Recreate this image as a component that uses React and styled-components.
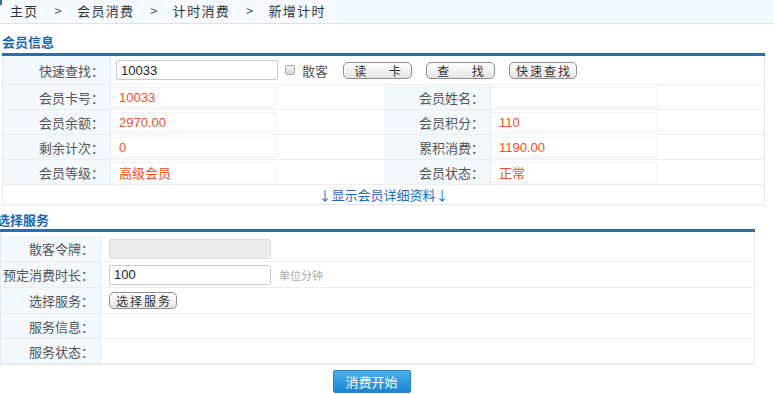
import React from "react";
import styled, { createGlobalStyle } from "styled-components";

const GlobalStyle = createGlobalStyle`
  body {
    margin: 0;
    background: #fff;
    font-family: "Noto Sans CJK SC", "Liberation Sans", sans-serif;
    font-size: 13px;
    color: #444;
  }
  * { box-sizing: border-box; }
`;

const App = () => {
  return (
    <>
      <GlobalStyle />
      <Breadcrumb>
        <Crumb>主页</Crumb>
        <Sep>&gt;</Sep>
        <Crumb>会员消费</Crumb>
        <Sep>&gt;</Sep>
        <Crumb>计时消费</Crumb>
        <Sep>&gt;</Sep>
        <Crumb>新增计时</Crumb>
      </Breadcrumb>

      <Section width="763px" offset="2px" top="4px">
        <SectionTitle height="28px">会员信息</SectionTitle>
        <Box>
          <Row height="29px">
            <Label width="108px">快速查找：</Label>
            <Cell>
              <TextInput defaultValue="10033" left="5px" />
              <Check />
              <CheckText>散客</CheckText>
              <GrayButton>读 卡</GrayButton>
              <GrayButton>查 找</GrayButton>
              <GrayButton tight>快速查找</GrayButton>
            </Cell>
          </Row>
          <Row>
            <Label width="108px">会员卡号：</Label>
            <Value>
              <ValueBox>10033</ValueBox>
            </Value>
            <Label width="107px">会员姓名：</Label>
            <Value>
              <ValueBox />
            </Value>
          </Row>
          <Row>
            <Label width="108px">会员余额：</Label>
            <Value>
              <ValueBox>2970.00</ValueBox>
            </Value>
            <Label width="107px">会员积分：</Label>
            <Value>
              <ValueBox>110</ValueBox>
            </Value>
          </Row>
          <Row>
            <Label width="108px">剩余计次：</Label>
            <Value>
              <ValueBox>0</ValueBox>
            </Value>
            <Label width="107px">累积消费：</Label>
            <Value>
              <ValueBox>1190.00</ValueBox>
            </Value>
          </Row>
          <Row>
            <Label width="108px">会员等级：</Label>
            <Value>
              <ValueBox>高级会员</ValueBox>
            </Value>
            <Label width="107px">会员状态：</Label>
            <Value>
              <ValueBox>正常</ValueBox>
            </Value>
          </Row>
          <MoreRow>
            <MoreLink>↓显示会员详细资料↓</MoreLink>
          </MoreRow>
        </Box>
      </Section>

      <Section width="755px" offset="0px" top="0px">
        <SectionTitle height="27px" pad="4px" shift="-3px">选择服务</SectionTitle>
        <Box pad="4px">
          <Row height="26px">
            <Label width="100px">散客令牌：</Label>
            <Cell>
              <TextInput disabled left="8px" />
            </Cell>
          </Row>
          <Row height="26px">
            <Label width="100px">预定消费时长：</Label>
            <Cell>
              <TextInput defaultValue="100" left="8px" />
              <Hint>单位分钟</Hint>
            </Cell>
          </Row>
          <Row height="26px">
            <Label width="100px">选择服务：</Label>
            <Cell>
              <GrayButton tight first>选择服务</GrayButton>
            </Cell>
          </Row>
          <Row height="25px">
            <Label width="100px">服务信息：</Label>
            <Cell />
          </Row>
          <Row height="25px">
            <Label width="100px">服务状态：</Label>
            <Cell />
          </Row>
        </Box>
        <Actions>
          <SubmitButton>消费开始</SubmitButton>
        </Actions>
      </Section>
    </>
  );
};

export default App;

const Breadcrumb = styled.div`
  position: relative;
  display: flex;
  align-items: center;
  height: 24px;
  padding: 0 0 2px 10px;
  background: #f4faff;
  border-bottom: 1px solid #dfe3e6;
  font-size: 13px;
  letter-spacing: 1.3px;
  color: #333;

  &::before {
    content: "";
    position: absolute;
    left: 0;
    top: 0;
    width: 2px;
    height: 5px;
    background: #2c6eab;
  }
`;

const Crumb = styled.span``;

const Sep = styled.span`
  margin: 0 14px 0 16px;
  color: #555;
`;

const Section = styled.div`
  width: ${({ width }) => width};
  margin-left: ${({ offset }) => offset};
  margin-top: ${({ top }) => top};
`;

const SectionTitle = styled.div`
  height: ${({ height }) => height};
  display: flex;
  align-items: center;
  padding-top: ${({ pad }) => pad || "2px"};
  margin-left: ${({ shift }) => shift || "0"};
  font-size: 13px;
  font-weight: bold;
  color: #1b67b3;
  border-bottom: 3px solid #2c6eab;
`;

const Box = styled.div`
  padding-top: ${({ pad }) => pad || "0"};
  border: 1px solid #e6e9ec;
  border-top: none;
`;

const Row = styled.div`
  display: flex;
  height: ${({ height }) => height || "25px"};
  border-bottom: 1px solid #eceef0;
`;

const Label = styled.div`
  width: ${({ width }) => width};
  flex: none;
  display: flex;
  align-items: center;
  justify-content: flex-end;
  padding-right: 6px;
  background: #f3f8fc;
  border-right: 1px solid #e4eaf0;
  color: #555;
  white-space: nowrap;
`;

const Cell = styled.div`
  flex: 1;
  display: flex;
  align-items: center;
`;

const Value = styled.div`
  width: 273px;
  flex: none;
  display: flex;
  align-items: center;

  &:last-child {
    flex: 1;
    width: auto;
  }
`;

const ValueBox = styled.div`
  width: 166px;
  height: 21px;
  display: flex;
  align-items: center;
  padding-left: 8px;
  border: 1px solid #f1f2f3;
  border-left: none;
  font-family: "Liberation Sans", "Noto Sans CJK SC", sans-serif;
  font-size: 13px;
  color: #ec5029;
`;

const TextInput = styled.input`
  width: 162px;
  height: 20px;
  margin-left: ${({ left }) => left};
  padding: 0 4px;
  border: 1px solid #c9c9c9;
  border-radius: 2px;
  font-family: "Liberation Sans", sans-serif;
  font-size: 13px;
  color: #222;
  outline: none;

  &:disabled {
    background: #ebebeb;
    border-color: #dcdcdc;
  }
`;

const Check = styled.span`
  width: 10px;
  height: 10px;
  margin: 0 7px 0 7px;
  border: 1px solid #aaa;
  border-radius: 2px;
  background: linear-gradient(#f8f8f8, #d8d8d8);
`;

const CheckText = styled.span`
  margin-right: 15px;
  font-size: 13px;
  color: #555;
`;

const GrayButton = styled.button`
  width: ${({ tight }) => (tight ? "68px" : "69px")};
  height: 17px;
  margin-right: 14px;
  margin-left: ${({ first }) => (first ? "8px" : "0")};
  padding: 0;
  border: 1px solid #8c8c8c;
  border-radius: 5px;
  background: linear-gradient(#ffffff, #e4e4e4);
  font-family: "Noto Sans CJK SC", sans-serif;
  font-size: 12px;
  line-height: 15px;
  letter-spacing: ${({ tight }) => (tight ? "2px" : "10px")};
  text-indent: ${({ tight }) => (tight ? "2px" : "10px")};
  color: #333;
`;

const Hint = styled.span`
  margin-left: 8px;
  font-size: 11px;
  color: #aaa;
`;

const MoreRow = styled.div`
  height: 19px;
  display: flex;
  align-items: center;
  justify-content: center;
`;

const MoreLink = styled.a`
  font-size: 13px;
  color: #1b6bc0;
  cursor: pointer;
`;

const Actions = styled.div`
  display: flex;
  justify-content: center;
  padding: 5px 12px 0 0;
`;

const SubmitButton = styled.button`
  width: 78px;
  height: 23px;
  border: 1px solid #2a86cc;
  border-radius: 2px;
  background: linear-gradient(#4cb0ec, #1c84d2);
  font-family: "Noto Sans CJK SC", sans-serif;
  font-size: 13px;
  color: #fff;
`;
